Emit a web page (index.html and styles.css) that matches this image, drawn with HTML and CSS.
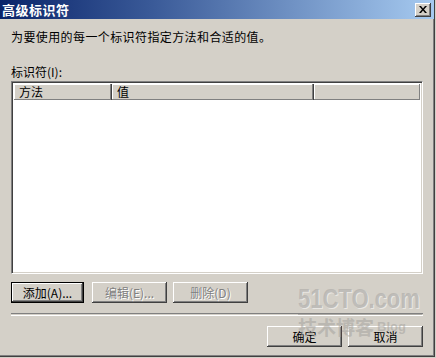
FILE: index.html
```html
<!DOCTYPE html>
<html lang="zh-CN">
<head>
    <meta charset="UTF-8">
    <title>高级标识符</title>
    <link rel="stylesheet" href="styles.css">
</head>
<body>
    <div class="window">
        <div class="titlebar">
            <span class="title">高级标识符</span>
            <button class="close-btn">
                <svg width="8" height="7" viewBox="0 0 8 7">
                    <path d="M0 0h2l2 2.5L6 0h2L5 3.5 8 7H6L4 4.5 2 7H0l3-3.5z" fill="#000"/>
                </svg>
            </button>
        </div>
        <div class="content">
            <p class="desc">为要使用的每一个标识符指定方法和合适的值。</p>
            <div class="label-text">标识符(<u>I</u>):</div>
            <div class="listview">
                <div class="list-header">
                    <div class="col col-method">方法</div>
                    <div class="col col-value">值</div>
                    <div class="col col-rest"></div>
                </div>
                <div class="list-body"></div>
            </div>
            <div class="btn-row">
                <button class="btn btn-default">添加(<u>A</u>)...</button>
                <button class="btn" disabled>编辑(<u>E</u>)...</button>
                <button class="btn" disabled>删除(<u>D</u>)</button>
            </div>
            <div class="separator"></div>
            <div class="footer">
                <button class="btn">确定</button>
                <button class="btn">取消</button>
            </div>
        </div>
        <div class="watermark">
            <div class="wm-big">51CTO.com</div>
            <div class="wm-line"></div>
            <div class="wm-small">技术博客<span class="wm-blog">Blog</span></div>
        </div>
    </div>
</body>
</html>
```

FILE: styles.css
```css
body {
    margin: 0;
    padding: 0;
    font-family: "Noto Sans CJK SC", "DejaVu Sans", sans-serif;
    font-size: 12px;
    color: #000;
    background: #d4d0c8;
}
.window {
    position: relative;
    width: 434px;
    height: 356px;
    background: #d4d0c8;
    border-right: 1px solid #404040;
    border-bottom: 1px solid #404040;
    box-shadow: inset -1px -1px 0 #808080;
    display: flex;
    flex-direction: column;
    overflow: hidden;
}
.titlebar {
    height: 19px;
    display: flex;
    align-items: center;
    justify-content: space-between;
    padding: 0 3px 0 2px;
    background: linear-gradient(90deg, #0a246a 0%, #3a5a98 35%, #a6caf0 100%);
}
.title {
    color: #fff;
    font-weight: bold;
    font-size: 13px;
    line-height: 16px;
    letter-spacing: 0.5px;
}
.close-btn {
    width: 16px;
    height: 14px;
    padding: 0;
    background: #d4d0c8;
    border: none;
    box-shadow: inset -1px -1px 0 #404040, inset 1px 1px 0 #fff, inset -2px -2px 0 #808080;
    display: flex;
    align-items: center;
    justify-content: center;
}
.content {
    flex: 1;
    padding: 0 11px 0 11px;
    display: flex;
    flex-direction: column;
}
.desc {
    margin: 10px 0 0 0;
    line-height: 16px;
    letter-spacing: 0.4px;
}
.label-text {
    margin-top: 20px;
    line-height: 14px;
}
u {
    text-decoration: none;
}
.listview {
    margin-top: 2px;
    height: 193px;
    box-sizing: border-box;
    background: #fff;
    border-top: 1px solid #808080;
    border-left: 1px solid #808080;
    border-right: 1px solid #fff;
    border-bottom: 1px solid #fff;
    box-shadow: inset 1px 1px 0 #404040, inset -1px -1px 0 #d4d0c8;
    padding: 2px;
    display: flex;
    flex-direction: column;
}
.list-header {
    display: flex;
    height: 16px;
}
.col {
    box-sizing: border-box;
    background: #d4d0c8;
    box-shadow: inset -1px -1px 0 #808080, inset 1px 1px 0 #fff;
    border-right: 1px solid #404040;
    padding-left: 5px;
    line-height: 15px;
}
.col-method {
    width: 98px;
}
.col-value {
    width: 202px;
}
.col-rest {
    flex: 1;
    border-right: none;
}
.list-body {
    flex: 1;
}
.btn-row {
    margin-top: 8px;
    display: flex;
    gap: 6px;
}
.btn {
    width: 75px;
    height: 21px;
    padding: 0;
    font-family: "Noto Sans CJK SC", "DejaVu Sans", sans-serif;
    font-size: 12px;
    color: #000;
    background: #d4d0c8;
    border: none;
    box-shadow: inset -1px -1px 0 #404040, inset 1px 1px 0 #fff, inset -2px -2px 0 #808080;
}
.btn-default {
    width: 71px;
    height: 19px;
    box-sizing: content-box;
    border: 1px solid #000;
    margin-right: 2px;
}
.btn:disabled {
    color: #808080;
    text-shadow: 1px 1px 0 #fff;
}
.separator {
    margin-top: 10px;
    height: 1px;
    border-top: 1px solid #808080;
    border-bottom: 1px solid #fff;
}
.footer {
    margin-top: 10px;
    display: flex;
    justify-content: flex-end;
    gap: 6px;
}
.watermark {
    position: absolute;
    left: 298px;
    top: 284px;
    width: 124px;
    pointer-events: none;
}
.wm-big {
    font-family: "Liberation Sans", sans-serif;
    font-size: 22px;
    font-weight: bold;
    line-height: 24px;
    transform: scaleY(1.25);
    transform-origin: top left;
    color: rgba(180, 178, 174, 0.8);
    text-shadow: 1px 1px 0 rgba(255, 255, 255, 0.5);
}
.wm-line {
    margin-top: 6px;
    height: 1px;
    background: rgba(150, 148, 144, 0.6);
}
.wm-small {
    margin-top: 1px;
    font-size: 19px;
    line-height: 22px;
    font-weight: bold;
    color: rgba(160, 158, 154, 0.5);
    white-space: nowrap;
}
.wm-blog {
    margin-left: 3px;
    font-family: "Liberation Sans", sans-serif;
    font-size: 13px;
    vertical-align: 4px;
}
```
